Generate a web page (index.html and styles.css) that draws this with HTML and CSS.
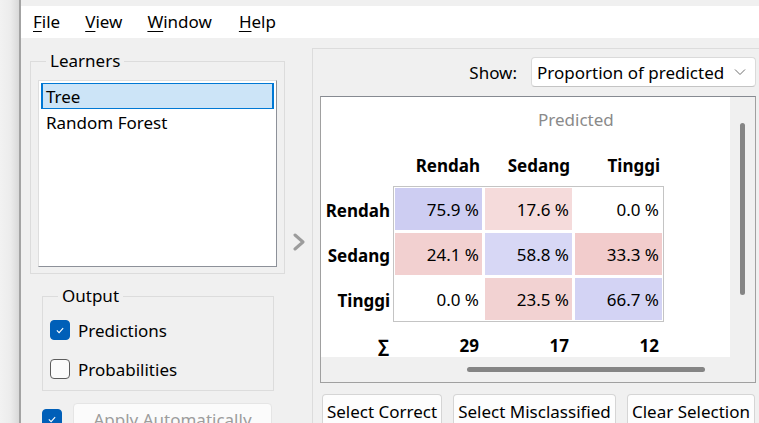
FILE: index.html
```html
<!DOCTYPE html>
<html lang="en">
<head>
  <meta charset="UTF-8" />
  <title>Confusion Matrix</title>
  <link rel="stylesheet" href="styles.css">
</head>
<body>
  <div class="desk"></div>
  <div class="win">
    <div class="titlebar"></div>
    <nav class="menubar">
      <span><u>F</u>ile</span>
      <span><u>V</u>iew</span>
      <span><u>W</u>indow</span>
      <span><u>H</u>elp</span>
    </nav>

    <div class="main">
      <!-- left controls -->
      <div class="controls">
        <fieldset class="group learners">
          <legend>Learners</legend>
          <ul class="list">
            <li class="sel">Tree</li>
            <li>Random Forest</li>
          </ul>
        </fieldset>

        <fieldset class="group output">
          <legend>Output</legend>
          <label class="check"><span class="box on"><svg viewBox="0 0 20 20"><path d="M6.5 10.5 L9 13 L13.5 8" /></svg></span>Predictions</label>
          <label class="check"><span class="box"></span>Probabilities</label>
        </fieldset>

        <div class="apply">
          <span class="box on"><svg viewBox="0 0 20 20"><path d="M6.5 10.5 L9 13 L13.5 8" /></svg></span>
          <button class="btn" disabled>Apply Automatically</button>
        </div>
      </div>

      <div class="splitter">
        <svg viewBox="0 0 14 18" width="14" height="18"><path d="M3 2 L11 9 L3 16" /></svg>
      </div>

      <!-- matrix panel -->
      <div class="panel">
        <div class="show">
          <span>Show:</span>
          <div class="combo">
            <span>Proportion of predicted</span>
            <svg viewBox="0 0 12 8" width="12" height="8"><path d="M1 1.5 L6 6.5 L11 1.5" /></svg>
          </div>
        </div>

        <div class="view">
          <div class="canvas">
            <div class="caption">Predicted</div>
            <div class="heads">
              <span>Rendah</span><span>Sedang</span><span>Tinggi</span>
            </div>
            <div class="body">
              <div class="rowheads">
                <span>Rendah</span><span>Sedang</span><span>Tinggi</span>
              </div>
              <div class="matrix">
                <span class="c-b1">75.9 %</span>
                <span class="c-r4">17.6 %</span>
                <span>0.0 %</span>
                <span class="c-r2">24.1 %</span>
                <span class="c-b3">58.8 %</span>
                <span class="c-r1">33.3 %</span>
                <span>0.0 %</span>
                <span class="c-r3">23.5 %</span>
                <span class="c-b2">66.7 %</span>
              </div>
            </div>
            <div class="sums">
              <span class="sigma">∑</span><span>29</span><span>17</span><span>12</span>
            </div>
          </div>
          <div class="vbar"><span class="thumb"></span></div>
          <div class="hbar"><span class="thumb"></span></div>
          <div class="corner"></div>
        </div>

        <div class="buttons">
          <button class="btn sel-correct">Select Correct</button>
          <button class="btn sel-wrong">Select Misclassified</button>
          <button class="btn sel-clear">Clear Selection</button>
        </div>
      </div>
    </div>
  </div>
</body>
</html>
```

FILE: styles.css
```css
html, body {
  margin: 0;
  height: 100%;
  overflow: hidden;
}
body {
  display: flex;
  font-family: 'Noto Sans', 'Open Sans', sans-serif;
  font-size: 17px;
  color: #000;
  background: #f0f0f0;
}
.desk {
  width: 19px;
  flex: none;
  background: linear-gradient(to right, #f2f2f2 0%, #ececec 55%, #d9d9d9 100%);
}
.win {
  flex: 1;
  min-width: 0;
  border-left: 2px solid #a3a3a3;
  background: #f0f0f0;
}
.titlebar {
  height: 6px;
  background: #f0f0f0;
}
.menubar {
  height: 32px;
  background: #fff;
  display: flex;
  align-items: center;
  padding-left: 12px;
}
.menubar span {
  padding-right: 25px;
  line-height: 20px;
}
.menubar span:nth-child(3) {
  padding-right: 27px;
}
.menubar u {
  text-underline-offset: 3px;
  text-decoration-thickness: 1px;
}

.main {
  display: flex;
  align-items: flex-start;
}

/* left controls */
.controls {
  width: 255px;
  flex: none;
  padding-left: 9px;
  padding-top: 13px;
}
.group {
  margin: 0;
  border: 1px solid #dcdcdc;
  min-width: 0;
  box-sizing: border-box;
}
.group legend {
  padding: 0 4px;
  margin-left: 8px;
  line-height: 20px;
}
.learners {
  width: 255px;
  padding: 9px 6px 6px 7px;
}
.list {
  list-style: none;
  margin: 0;
  padding: 2px;
  width: 239px;
  height: 187px;
  box-sizing: border-box;
  background: #fff;
  border: 1px solid;
  border-color: #dedede #8d9199 #8d9199 #dedede;
}
.list li {
  height: 26px;
  line-height: 26px;
  padding-left: 4px;
  border: 1px solid transparent;
  box-sizing: border-box;
}
.list li.sel {
  background: #cce4f7;
  border-color: #0078d4;
  border-left-width: 2px;
  border-right-width: 2px;
  padding-left: 3px;
}
.output {
  width: 232px;
  margin: 12px 0 0 12px;
  padding: 14px 6px 11px 7px;
  display: flex;
  flex-direction: column;
  gap: 19px;
}
.check {
  display: flex;
  align-items: center;
  gap: 8px;
  height: 20px;
}
.box {
  width: 20px;
  height: 20px;
  box-sizing: border-box;
  border: 1px solid #5c5c5c;
  border-radius: 4px;
  background: #fbfbfb;
  flex: none;
}
.box.on {
  background: #005fb8;
  border-color: #005fb8;
}
.box svg {
  display: block;
  width: 18px;
  height: 18px;
}
.box svg path {
  fill: none;
  stroke: #fff;
  stroke-width: 1.2;
}
.apply {
  display: flex;
  align-items: center;
  gap: 11px;
  margin: 12px 0 0 12px;
}
.btn {
  font: inherit;
  color: #000;
  height: 34px;
  padding: 0;
  white-space: nowrap;
  flex: none;
  background: #fdfdfd;
  border: 1px solid #d5d5d5;
  border-bottom-color: #c2c2c2;
  border-radius: 4px;
}
.apply .btn {
  width: 199px;
  height: 32px;
  color: #9d9d9d;
  background: #fbfbfb;
  border-color: #e5e5e5;
}
.sel-correct { width: 120px; }
.sel-wrong { width: 163px; }
.sel-clear { width: 128px; }

.splitter {
  width: 27px;
  flex: none;
  display: flex;
  justify-content: center;
  padding-top: 195px;
}
.splitter path {
  fill: none;
  stroke: #9c9c9c;
  stroke-width: 3;
  stroke-linecap: round;
  stroke-linejoin: round;
}

/* right panel */
.panel {
  flex: 1;
  margin-top: 10px;
  margin-right: -1px;
  border: 1px solid #dcdcdc;
  padding: 8px 3px 0 7px;
  min-width: 0;
}
.show {
  display: flex;
  justify-content: flex-end;
  align-items: center;
  gap: 14px;
}
.combo {
  width: 225px;
  height: 30px;
  box-sizing: border-box;
  display: flex;
  align-items: center;
  justify-content: space-between;
  padding: 0 9px 0 5px;
  background: #fff;
  border: 1px solid #dadada;
  border-bottom-color: #c4c4c4;
  border-radius: 4px;
}
.combo path {
  fill: none;
  stroke: #6f6f6f;
  stroke-width: 1;
}
.view {
  margin-top: 9px;
  height: 287px;
  box-sizing: border-box;
  border: 1px solid #a0a0a0;
  border-top-color: #868a91;
  display: grid;
  grid-template-columns: 409px 25px;
  grid-template-rows: 260px 25px;
  overflow: hidden;
}
.canvas {
  background: #fff;
  overflow: hidden;
}
.vbar, .hbar, .corner {
  background: #f0f0f0;
}
.vbar {
  display: flex;
  justify-content: center;
  padding-top: 26px;
}
.vbar .thumb {
  width: 5px;
  height: 172px;
  border-radius: 3px;
  background: #858585;
}
.hbar {
  display: flex;
  align-items: center;
  padding-left: 146px;
}
.hbar .thumb {
  width: 238px;
  height: 5px;
  border-radius: 3px;
  background: #858585;
}

/* confusion matrix */
.caption {
  padding: 13px 0 0 217px;
  line-height: 20px;
  color: #8a8a8a;
}
.heads, .sums {
  display: flex;
  gap: 3px;
  line-height: 20px;
  font-weight: bold;
}
.heads {
  margin-top: 26px;
  padding-left: 74px;
}
.heads span, .sums span {
  width: 87px;
  box-sizing: border-box;
  text-align: right;
  padding-right: 2px;
}
.body {
  display: flex;
  margin-top: 10px;
}
.rowheads {
  width: 69px;
  padding-top: 4px;
  display: flex;
  flex-direction: column;
  gap: 3px;
  font-weight: bold;
  text-align: right;
}
.rowheads span {
  height: 42px;
  line-height: 42px;
}
.matrix {
  margin-left: 3px;
  border: 1px solid #c4c4c4;
  padding: 1px;
  display: grid;
  grid-template-columns: repeat(3, 87px);
  grid-auto-rows: 42px;
  gap: 3px;
}
.matrix span {
  line-height: 43px;
  text-align: right;
  padding-right: 3px;
}
.c-b1 { background: #cdcdf2; }
.c-b2 { background: #d3d3f4; }
.c-b3 { background: #d7d7f5; }
.c-r1 { background: #f2cccc; }
.c-r2 { background: #f2d0d0; }
.c-r3 { background: #f2d2d2; }
.c-r4 { background: #f5dbdb; }
.sums {
  margin-top: 14px;
}
.sums .sigma {
  width: 69px;
  margin-right: 2px;
  padding-right: 1px;
}
.sums span + span {
  padding-right: 3px;
}

.buttons {
  display: flex;
  gap: 11px;
  margin-top: 11px;
  padding-left: 2px;
}
```
